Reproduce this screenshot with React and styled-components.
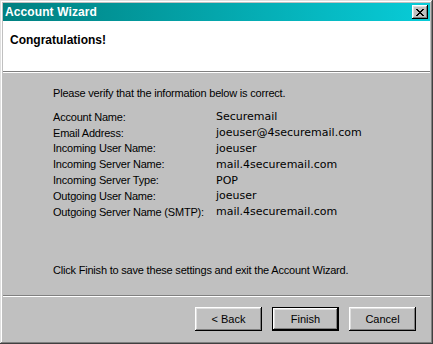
import React from 'react'
import styled, { createGlobalStyle } from 'styled-components'

const GlobalStyle = createGlobalStyle`
  html, body {
    margin: 0;
    padding: 0;
    background: #c0c0c0;
  }
  body {
    font-family: "Liberation Sans", Arial, sans-serif;
    font-size: 11px;
    color: #000;
  }
`

const raised = `
  box-shadow:
    inset -1px -1px #000,
    inset 1px 1px #fff,
    inset -2px -2px #808080,
    inset 2px 2px #dfdfdf;
`

const Window = styled.div`
  width: 433px;
  height: 344px;
  box-sizing: border-box;
  padding: 3px;
  background: #c0c0c0;
  display: flex;
  flex-direction: column;
  box-shadow:
    inset -1px -1px #404040,
    inset 1px 1px #dfdfdf,
    inset -2px -2px #808080,
    inset 2px 2px #fff;
`

const TitleBar = styled.div`
  height: 18px;
  flex: none;
  display: flex;
  align-items: center;
  justify-content: space-between;
  padding: 0 2px 0 2px;
  background: linear-gradient(to right, #008080, #08ccd8);
`

const Title = styled.span`
  color: #fff;
  font-weight: bold;
  font-size: 12px;
  letter-spacing: 0.1px;
`

const CloseButton = styled.button`
  width: 16px;
  height: 14px;
  padding: 0;
  border: 0;
  background: #c0c0c0;
  display: flex;
  align-items: center;
  justify-content: center;
  ${raised}
`

const Header = styled.div`
  flex: none;
  height: 51px;
  background: #fff;
  padding: 12px 0 0 7px;
  box-sizing: border-box;
  border-bottom: 1px solid #808080;
  box-shadow: 0 1px #fff;
`

const Heading = styled.h1`
  margin: 0;
  font-size: 12px;
  font-weight: bold;
  line-height: 14px;
`

const Body = styled.div`
  flex: 1;
  display: flex;
  flex-direction: column;
  padding: 14px 0 0 50px;
  letter-spacing: -0.2px;
`

const Text = styled.p`
  margin: 0;
  line-height: 14px;
`

const InfoGrid = styled.dl`
  margin: 9px 0 0 0;
  display: grid;
  grid-template-columns: 163px auto;
  grid-auto-rows: 15.8px;
  align-items: center;
`

const Label = styled.dt`
  margin: 0;
`

const Value = styled.dd`
  margin: 0;
  font-family: "DejaVu Sans", Verdana, sans-serif;
  font-size: 11px;
  letter-spacing: 0;
`

const Footer = styled(Text)`
  margin-top: auto;
  margin-bottom: 18px;
`

const Separator = styled.div`
  flex: none;
  height: 1px;
  background: #808080;
  border-bottom: 1px solid #fff;
`

const ButtonRow = styled.div`
  flex: none;
  display: flex;
  justify-content: flex-end;
  gap: 10px;
  padding: 10px 14px 10px 0;
`

const Button = styled.button`
  width: 67px;
  height: 24px;
  padding: 0;
  border: 0;
  background: #c0c0c0;
  font-family: "Liberation Sans", Arial, sans-serif;
  font-size: 11px;
  color: #000;
  ${({ $default }) => $default ? `
    box-shadow:
      inset 0 0 0 1px #000,
      inset -2px -2px #000,
      inset 2px 2px #fff,
      inset -3px -3px #808080,
      inset 3px 3px #dfdfdf;
  ` : `
    box-shadow:
      inset -1px -1px #000,
      inset 1px 1px #fff,
      inset -2px -2px #808080,
      inset 2px 2px #dfdfdf;
  `}
`

const info = [
  ['Account Name:', 'Securemail'],
  ['Email Address:', 'joeuser@4securemail.com'],
  ['Incoming User Name:', 'joeuser'],
  ['Incoming Server Name:', 'mail.4securemail.com'],
  ['Incoming Server Type:', 'POP'],
  ['Outgoing User Name:', 'joeuser'],
  ['Outgoing Server Name (SMTP):', 'mail.4securemail.com'],
]

const App = () => (
  <>
    <GlobalStyle />
    <Window>
      <TitleBar>
        <Title>Account Wizard</Title>
        <CloseButton aria-label="Close">
          <svg width="8" height="7" viewBox="0 0 8 7" shapeRendering="crispEdges">
            <path d="M0 0h2v1h-2zM6 0h2v1h-2zM1 1h2v1h-2zM5 1h2v1h-2zM2 2h4v1h-4zM3 3h2v1h-2zM2 4h4v1h-4zM1 5h2v1h-2zM5 5h2v1h-2zM0 6h2v1h-2zM6 6h2v1h-2z" fill="#000" />
          </svg>
        </CloseButton>
      </TitleBar>
      <Header>
        <Heading>Congratulations!</Heading>
      </Header>
      <Body>
        <Text>Please verify that the information below is correct.</Text>
        <InfoGrid>
          {info.map(([label, value]) => (
            <React.Fragment key={label}>
              <Label>{label}</Label>
              <Value>{value}</Value>
            </React.Fragment>
          ))}
        </InfoGrid>
        <Footer>Click Finish to save these settings and exit the Account Wizard.</Footer>
      </Body>
      <Separator />
      <ButtonRow>
        <Button>&lt; Back</Button>
        <Button $default>Finish</Button>
        <Button>Cancel</Button>
      </ButtonRow>
    </Window>
  </>
)

export default App
